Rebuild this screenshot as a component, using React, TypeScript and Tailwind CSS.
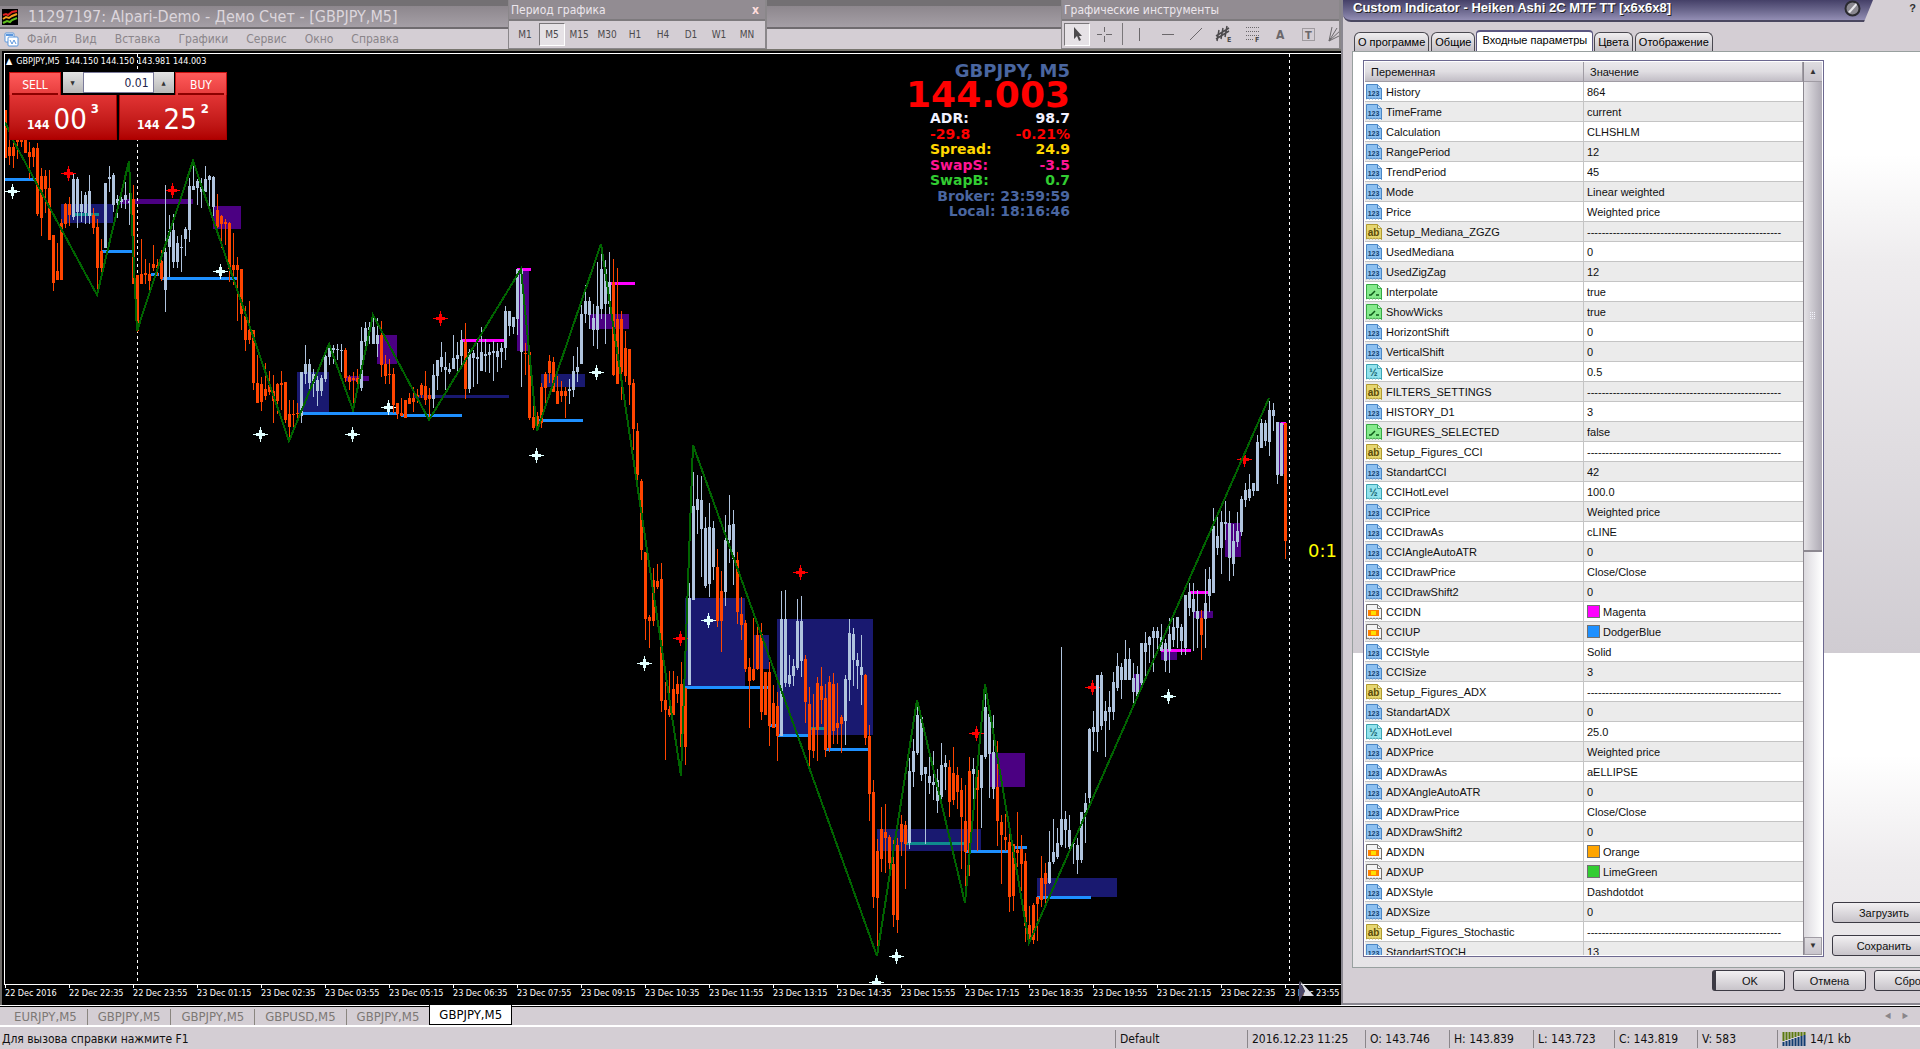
import { ReactNode } from 'react';

const DOWN = '#ff4500';
const UP = '#b0c4de';
const NAVY = '#191970';
const INDIGO = '#4b0082';
const BLUE = '#1e90ff';
const TEAL = '#0f8b8d';
const MAGENTA = '#ff00ff';

type Bar = [high: number, top: number, bottom: number, low: number];
type Run = { x: number; color: string; bars: Bar[] };

// candles are 4px apart, grouped in runs of one colour
const runs: Run[] = [
  { x: 5, color: DOWN, bars: [[110,110,158,158],[140,147,156,165],[140,147,156,168],[130,130,142,159],[130,130,142,147],[130,130,153,153],[142,152,157,179],[147,148,157,167],[143,148,214,216],[168,176,218,236],[170,176,189,213],[170,188,240,240],[235,235,283,291],[243,271,280,280],[219,223,280,280],[203,204,224,228],[197,204,215,226]] },
  { x: 73, color: UP, bars: [[174,179,217,220],[177,179,212,228],[191,204,212,222],[192,195,213,224],[175,191,216,224]] },
  { x: 93, color: DOWN, bars: [[208,215,228,234],[219,227,268,296],[239,251,268,272]] },
  { x: 105, color: UP, bars: [[183,183,248,248],[166,177,179,192],[173,175,205,212],[195,199,203,218],[190,199,202,208],[182,195,200,209],[191,201,203,225]] },
  { x: 133, color: DOWN, bars: [[185,199,284,284],[275,275,331,332],[239,274,284,284],[259,273,275,284],[263,274,281,292],[245,264,268,271],[259,265,268,276],[250,261,279,281]] },
  { x: 165, color: UP, bars: [[185,252,290,312],[215,231,247,277],[214,230,262,268],[236,243,262,268],[235,247,248,272],[227,229,239,256],[178,186,230,242],[162,186,190,190],[179,181,188,205],[178,187,192,208],[166,179,192,192],[175,176,180,212],[176,177,207,216]] },
  { x: 217, color: DOWN, bars: [[194,210,227,228],[215,216,224,248],[219,222,224,245],[222,223,269,282],[233,265,270,285],[257,265,270,321],[269,269,314,330],[306,316,340,351],[301,330,340,344],[330,330,383,390],[355,383,403,403],[377,384,402,411],[363,389,396,400],[371,385,392,395],[375,391,401,423],[383,384,401,414],[371,383,385,410],[382,382,420,423],[400,414,427,440],[400,414,415,428],[403,413,414,419]] },
  { x: 301, color: UP, bars: [[372,372,416,423],[345,364,374,384],[359,364,383,390],[369,374,383,397],[376,380,391,406],[375,378,391,396],[354,356,379,382],[343,348,357,365],[345,348,350,364],[344,349,350,360],[344,350,351,372]] },
  { x: 345, color: DOWN, bars: [[348,350,378,382],[375,377,382,390],[372,378,380,410],[369,378,382,385]] },
  { x: 361, color: UP, bars: [[327,341,388,391],[322,328,342,348],[322,327,330,344],[315,327,344,344],[318,335,344,357]] },
  { x: 381, color: DOWN, bars: [[321,335,365,377],[355,364,376,384],[359,374,375,384],[368,374,405,413],[403,403,414,419],[398,413,416,416],[400,400,418,418],[393,398,404,404],[387,398,402,412],[389,395,397,403],[383,385,395,398],[371,386,400,405],[388,395,399,417]] },
  { x: 433, color: UP, bars: [[364,375,399,408],[360,360,376,390],[342,357,367,372],[352,367,370,390],[363,369,372,374],[335,358,369,369],[342,355,359,372],[330,340,356,366]] },
  { x: 465, color: DOWN, bars: [[323,342,389,399]] },
  { x: 469, color: UP, bars: [[349,352,389,393],[350,353,358,387],[343,357,359,384],[327,352,371,371],[339,354,356,372],[344,352,355,373],[341,351,353,381],[343,351,357,372],[343,348,352,368],[306,311,348,360],[311,311,326,336],[317,317,327,334],[269,269,319,335],[268,269,352,387]] },
  { x: 525, color: DOWN, bars: [[343,353,354,375],[352,352,418,420],[395,417,428,430],[412,416,427,431],[383,387,423,428],[372,374,388,405],[355,361,373,383],[357,362,392,392],[376,391,404,404],[381,391,396,402],[387,391,396,418]] },
  { x: 569, color: UP, bars: [[379,389,391,404],[356,371,390,397],[347,367,372,382],[305,314,364,364],[285,301,314,323],[297,301,315,329],[304,318,330,346],[262,306,330,349],[250,269,309,319],[260,269,304,344],[252,282,304,314]] },
  { x: 613, color: DOWN, bars: [[259,282,375,376],[268,319,384,384],[311,319,372,400],[331,348,376,382],[349,349,385,405],[379,383,429,450],[423,431,475,492],[479,481,550,560],[552,552,619,640],[615,617,621,648],[568,580,621,626],[564,581,587,589],[563,579,701,712],[682,700,710,760],[671,709,715,717],[671,689,715,715],[676,684,694,703],[662,684,747,747],[688,688,747,765]] },
  { x: 689, color: UP, bars: [[583,598,685,685],[472,506,600,600],[475,499,510,534],[476,500,529,577],[517,528,586,588],[503,527,584,597],[521,528,567,580]] },
  { x: 717, color: DOWN, bars: [[549,567,621,627],[571,591,621,652]] },
  { x: 725, color: UP, bars: [[515,540,592,606],[495,525,540,563],[510,524,559,585]] },
  { x: 737, color: DOWN, bars: [[552,560,612,624],[597,614,625,640],[620,623,669,672],[658,667,681,728],[618,669,680,681],[627,635,669,670],[623,634,712,720],[672,672,715,715],[662,672,726,746],[685,703,728,728],[692,706,736,761]] },
  { x: 781, color: UP, bars: [[591,619,736,736],[590,619,683,687],[655,675,684,687],[659,666,676,686],[599,621,668,670],[596,621,661,677]] },
  { x: 805, color: DOWN, bars: [[655,659,702,723],[687,704,750,772],[694,728,751,758],[677,683,730,761],[667,686,700,724],[684,698,750,757],[676,682,748,752],[673,684,731,744],[683,723,728,744],[715,717,724,753]] },
  { x: 845, color: UP, bars: [[675,679,721,745],[619,633,680,701],[628,634,660,686],[653,660,666,689],[635,667,675,705]] },
  { x: 865, color: DOWN, bars: [[674,675,738,745],[725,736,794,821],[780,792,897,908],[839,851,898,951],[807,829,859,872],[804,832,838,873],[835,837,863,874],[840,864,915,927],[838,845,920,933],[815,824,842,856],[821,825,844,889]] },
  { x: 909, color: UP, bars: [[758,771,843,849],[739,751,772,787],[706,715,753,755],[716,717,775,781],[767,767,774,844],[753,776,783,794],[751,782,785,800],[769,780,801,813],[743,765,797,808],[755,763,767,790]] },
  { x: 949, color: DOWN, bars: [[760,767,802,817],[747,773,800,805],[767,775,792,809],[778,790,817,869],[785,821,852,893],[757,771,853,876]] },
  { x: 973, color: UP, bars: [[758,769,774,804]] },
  { x: 977, color: DOWN, bars: [[757,770,790,851]] },
  { x: 981, color: UP, bars: [[755,755,788,828],[694,707,757,759],[710,714,754,798],[715,752,789,799]] },
  { x: 997, color: DOWN, bars: [[741,787,821,846],[815,822,835,884],[814,837,840,851],[833,842,897,912],[844,844,896,911],[812,850,853,867],[835,849,864,891],[853,861,926,942],[906,925,940,944],[903,905,940,944],[897,897,904,941],[856,878,900,907],[863,873,884,904]] },
  { x: 1049, color: UP, bars: [[831,862,883,884],[819,852,862,864],[828,843,857,859],[647,819,845,847],[811,819,830,848],[815,830,847,851],[843,843,844,864],[838,845,860,874],[812,812,860,863],[793,803,813,843],[728,729,798,804],[711,727,732,751],[675,675,732,752],[672,675,726,730],[701,711,721,757],[691,707,712,730],[672,682,712,720],[653,666,688,691],[663,667,680,699],[640,659,680,680],[648,659,680,680],[663,678,692,704],[666,674,696,698],[643,643,683,689],[632,643,652,676],[636,637,645,663],[627,631,638,672],[627,631,638,651],[624,637,651,651],[639,643,661,672],[618,634,651,673],[618,627,640,647],[617,617,628,648],[624,627,641,655],[595,595,648,655],[583,592,608,616],[583,599,612,651],[590,611,619,648]] },
  { x: 1201, color: DOWN, bars: [[610,618,635,660]] },
  { x: 1205, color: UP, bars: [[569,603,619,648],[567,579,596,612],[508,526,593,593],[514,536,548,555],[511,522,548,574],[501,522,524,540],[511,523,558,581],[524,541,564,576],[512,531,542,547],[496,499,532,536],[483,490,500,507],[474,489,498,501],[483,483,491,496],[435,442,491,491],[419,423,448,448],[420,423,441,446],[401,410,442,456],[403,410,416,431],[422,422,475,484],[423,423,476,476]] },
  { x: 1285, color: DOWN, bars: [[423,423,541,559]] },
];

// [x1, y1, x2, y2, fill]
const zones: [number, number, number, number, string][] = [
  [61, 204, 113, 223, NAVY], [117, 199, 193, 204, INDIGO], [213, 206, 241, 229, INDIGO],
  [297, 372, 329, 413, NAVY], [345, 376, 369, 381, INDIGO], [377, 335, 397, 364, INDIGO],
  [413, 395, 509, 398, NAVY], [517, 271, 529, 351, INDIGO], [541, 374, 585, 387, NAVY],
  [590, 314, 629, 329, INDIGO], [685, 598, 745, 686, NAVY], [753, 635, 769, 669, NAVY],
  [777, 619, 873, 735, NAVY], [877, 829, 981, 851, NAVY], [989, 753, 1025, 787, INDIGO],
  [1037, 878, 1117, 897, NAVY], [1133, 674, 1141, 692, INDIGO], [1161, 651, 1177, 660, INDIGO],
  [1193, 611, 1213, 618, INDIGO], [1225, 523, 1241, 557, INDIGO], [1277, 422, 1285, 474, INDIGO],
];

// horizontal levels, 3px thick: [x1, x2, y, fill]
const levels: [number, number, number, string][] = [
  [5, 36, 178, BLUE], [73, 99, 213, TEAL], [101, 133, 250, BLUE], [151, 159, 273, BLUE],
  [161, 238, 277, BLUE], [301, 397, 412, BLUE], [401, 462, 414, BLUE], [461, 504, 339, MAGENTA],
  [517, 531, 268, MAGENTA], [537, 583, 419, BLUE], [611, 635, 282, MAGENTA], [685, 769, 686, BLUE],
  [770, 778, 724, BLUE], [777, 810, 734, BLUE], [809, 825, 727, TEAL], [825, 870, 748, BLUE],
  [905, 965, 842, TEAL], [965, 1009, 850, BLUE], [1013, 1027, 846, BLUE], [1037, 1091, 896, BLUE],
  [1161, 1191, 649, MAGENTA], [1189, 1209, 591, MAGENTA], [1281, 1286, 422, MAGENTA],
];

const zigzag =
  '5,122 13,140 97,295 129,161 137,331 193,161 289,441 329,344 353,410 373,315 429,420 521,269 537,431 601,244 681,776 693,445 877,956 917,700 965,903 985,684 1029,943 1269,398';

const redStars = [[68, 173], [172, 190], [440, 318], [680, 638], [800, 572], [976, 733], [1092, 687], [1244, 459]];
const whiteStars = [[12, 191], [220, 271], [260, 434], [352, 434], [388, 407], [536, 455], [596, 372], [644, 663], [708, 620], [896, 956], [876, 982], [1168, 696]];

const times = ['22 Dec 2016', '22 Dec 22:35', '22 Dec 23:55', '23 Dec 01:15', '23 Dec 02:35', '23 Dec 03:55', '23 Dec 05:15', '23 Dec 06:35', '23 Dec 07:55', '23 Dec 09:15', '23 Dec 10:35', '23 Dec 11:55', '23 Dec 13:15', '23 Dec 14:35', '23 Dec 15:55', '23 Dec 17:15', '23 Dec 18:35', '23 Dec 19:55', '23 Dec 21:15', '23 Dec 22:35', '23 Dec 23:55'];

const Star = ({ x, y, color }: { x: number; y: number; color: string }) => (
  <path d={`M${x - 7} ${y}h15v1h-15zM${x} ${y - 7}h1v15h-1zM${x - 4} ${y - 1}h9v3h-9zM${x - 1} ${y - 4}h3v9h-3z`} fill={color} />
);

const Chart = () => (
  <svg className="block h-full w-full" shapeRendering="crispEdges" aria-label="GBPJPY,M5">
    <g transform="translate(-5 -54)">
      {zones.map(([x1, y1, x2, y2, fill]) => (
        <rect key={`${x1}-${y1}`} x={x1} y={y1} width={x2 - x1} height={y2 - y1} fill={fill} />
      ))}
      {levels.map(([x1, x2, y, fill]) => (
        <rect key={`${x1}-${y}`} x={x1} y={y} width={x2 - x1} height={3} fill={fill} />
      ))}
      <path d="M137.5 54V983M1289.5 54V983" stroke="#fff" strokeDasharray="3 3" />
      {redStars.map(([x, y]) => <Star key={x} x={x} y={y} color="#ff0000" />)}
      {whiteStars.map(([x, y]) => <Star key={x} x={x} y={y} color="#e0ffff" />)}
      {runs.map((run) =>
        run.bars.map(([high, top, bottom, low], i) => {
          const x = run.x + i * 4;
          return (
            <path
              key={x}
              d={`M${x} ${high}h1V${low}h-1zM${x - 1} ${top}h3V${bottom}h-3z`}
              fill={run.color}
            />
          );
        })
      )}
      <polyline points={zigzag} fill="none" stroke="#006400" strokeWidth="2" />
    </g>
  </svg>
);

const TitleStrip = ({ children }: { children?: ReactNode }) => (
  <div className="flex h-[29px] items-center gap-2 border-t-[6px] border-b-2 border-t-[#737073] border-b-[#6f6b6f] bg-linear-to-b from-[#8d878d] to-[#a59fa6] px-0.5">
    {children}
  </div>
);

const menu = ['Файл', 'Вид', 'Вставка', 'Графики', 'Сервис', 'Окно', 'Справка'];
const periods = ['M1', 'M5', 'M15', 'M30', 'H1', 'H4', 'D1', 'W1', 'MN'];

const pressed = 'grid h-[23px] place-items-center border border-t-[#7a777a] border-l-[#7a777a] border-r-white border-b-white bg-[#e6e2e6] text-[10px] text-[#4c4a4c]';

const tools: [string, ReactNode][] = [
  ['Курсор', <path d="M6 2v12l3-3 2 5 2-1-2-4h3z" fill="#4c4a4c" stroke="none" />],
  ['Перекрестие', <path d="M9.5 2v5m0 4v6M2 9.5h5m4 0h6" />],
  ['Вертикальная линия', <path d="M9.5 3v13" />],
  ['Горизонтальная линия', <path d="M3 9.5h12" />],
  ['Трендовая линия', <path d="M3 15L15 3" />],
  ['Канал', <><path d="M1 11L14 3M1 14L14 6M4 5L2 16M8 3L6 14M12 1L10 12" strokeWidth="1.500" stroke="#4c4a4c" /><text x="12" y="17" fontSize="7" fontWeight="bold" fill="#4c4a4c" stroke="none">E</text></>],
  ['Фибоначчи', <><path d="M3 2.5h13M3 6.5h13M3 10.5h13M3 14.5h8" strokeDasharray="1 1" /><text x="12" y="17" fontSize="7" fontWeight="bold" fill="#4c4a4c" stroke="none">F</text></>],
  ['Текст', <text x="5" y="14" fontSize="12" fontWeight="bold" fill="#6b686b" stroke="none">A</text>],
  ['Метка', <><rect x="3.5" y="3.5" width="12" height="12" strokeDasharray="1 1" /><text x="6" y="14" fontSize="11" fontWeight="bold" fill="#6b686b" stroke="none">T</text></>],
  ['Веер', <path d="M2 16L5 2M2 16L10 3M2 16L14 5M2 16L16 9" />],
];

const Toolbar = ({ title, width, closable, children }: { title: string; width: string; closable?: boolean; children: ReactNode }) => (
  <div className={`${width} shrink-0 overflow-hidden border-r-2 border-b border-l border-[#8a878a] bg-[#d4ced4]`}>
    <div className="flex h-[21px] items-center justify-between border-b-2 border-[#7d7a7d] bg-[#928c92] pr-1.5 pl-0.5 text-[12px] whitespace-nowrap text-[#ece6ec]">
      {title}
      {closable && <button aria-label="Закрыть" className="text-[12px] leading-3 font-bold text-[#ffdcdc]">x</button>}
    </div>
    <div className="flex h-[26px] items-center pl-0.5">{children}</div>
  </div>
);

const AppHeader = () => (
  <div className="flex h-[51px] shrink-0 border-b-2 border-[#77756e]">
    <div className="w-[508px] shrink-0">
      <TitleStrip>
        <svg className="shrink-0" width="16" height="16" viewBox="0 0 16 16" fill="none" strokeWidth="2">
          <rect width="16" height="16" fill="#000" />
          <path d="M1 6l3-1 2 1 4-3 5-1" stroke="#e02020" />
          <path d="M1 10l3-2 3 1 3-2 5-2" stroke="#f0a020" />
          <path d="M1 14l4-2 3 1 2-2 5-2" stroke="#60c020" />
        </svg>
        <h1 className="pl-0.5 text-[16px] leading-5 whitespace-nowrap text-[#dcd6dc]">11297197: Alpari-Demo - Демо Счет - [GBPJPY,M5]</h1>
      </TitleStrip>
      <nav className="flex h-[20px] items-center bg-[#d4ced4] pl-1">
        <svg width="15" height="15" viewBox="0 0 15 15" fill="#fff" stroke="#5b96dc">
          <rect x="1" y="1" width="9" height="9" rx="1" />
          <path d="M2 3h7" strokeWidth="2" />
          <rect x="4" y="5" width="10" height="9" rx="1" />
          <path d="M6 8l2 4 2-4 2 4" fill="none" />
        </svg>
        <div className="flex gap-[18px] pl-2">
          {menu.map((item) => (
            <button key={item} className="text-[12px] leading-4 text-[#8a858a]">{item}</button>
          ))}
        </div>
      </nav>
    </div>

    <Toolbar title="Период графика" width="w-[259px]" closable>
      {periods.map((p) => (
        <button
          key={p}
          className={p === 'M5' ? `${pressed} w-[26px]` : 'h-[22px] w-7 text-[10px] text-[#4c4a4c]'}
        >
          {p}
        </button>
      ))}
    </Toolbar>

    <div className="min-w-0 flex-1">
      <TitleStrip />
      <div className="h-[20px] bg-[#d4ced4]" />
    </div>

    <Toolbar title="Графические инструменты" width="w-[280px]">
      {tools.map(([name, icon], i) => (
        <button
          key={name}
          aria-label={name}
          className={
            i === 0
              ? `${pressed} w-[26px] shrink-0`
              : i === 2
                ? 'ml-1 grid h-[22px] w-8 shrink-0 place-items-center border-l border-[#7a777a]'
                : 'grid h-[22px] w-[28px] shrink-0 place-items-center'
          }
        >
          <svg width="18" height="18" viewBox="0 0 18 18" fill="none" stroke="#6b686b">{icon}</svg>
        </button>
      ))}
    </Toolbar>
  </div>
);

const TradePanel = () => (
  <div className="absolute top-[21px] left-[7px] w-[218px] text-white">
    <div className="flex h-[23px] justify-between">
      <button className="w-[52px] border border-b-0 border-[#c81010] bg-linear-to-b from-[#ff5a5a] to-[#e63c3c] px-0.5 text-[12px] leading-6">
        SELL
        <span className="block h-0.5 -translate-y-1 bg-[#8c0000]" />
      </button>
      <div className="flex h-[21px]">
        <button aria-label="Уменьшить" className="w-5 bg-linear-to-b from-[#e4e4e4] to-[#b8b8b8] text-[6px] text-[#333]">▼</button>
        <input aria-label="Объем" defaultValue="0.01" className="w-[71px] border border-[#7a7a9a] bg-white pr-1 text-right text-[12px] text-[#22224a]" />
        <button aria-label="Увеличить" className="w-5 bg-linear-to-b from-[#e4e4e4] to-[#b8b8b8] text-[6px] text-[#333]">▲</button>
      </div>
      <button className="w-[52px] border border-b-0 border-[#c81010] bg-linear-to-b from-[#ff5a5a] to-[#e63c3c] px-0.5 text-[12px] leading-6">
        BUY
        <span className="block h-0.5 -translate-y-1 bg-[#8c0000]" />
      </button>
    </div>
    <div className="flex h-[45px] gap-0.5">
      {[['00', '3'], ['25', '2']].map(([big, small]) => (
        <div key={big} className="flex flex-1 items-end justify-center gap-1 border border-t-0 border-[#a80000] bg-linear-to-b from-[#e23434] to-[#b00000] pb-1.5">
          <span className="text-[12px] leading-4 font-bold">144</span>
          <span className="text-[29px] leading-7">{big}</span>
          <span className="self-start pt-1 text-[13px] leading-5 font-bold">{small}</span>
        </div>
      ))}
    </div>
  </div>
);

const stats = [
  ['ADR:', '98.7', 'text-[#f0f0ff]'],
  ['-29.8', '-0.21%', 'text-[#ff0000]'],
  ['Spread:', '24.9', 'text-[#ffd700]'],
  ['SwapS:', '-3.5', 'text-[#ff1493]'],
  ['SwapB:', '0.7', 'text-[#32cd32]'],
];

const QuoteInfo = () => (
  <div className="absolute top-[10px] right-[271px] w-[164px] text-right font-['DejaVu_Sans'] font-bold text-[#4a66a0]">
    <div className="text-[18px] leading-5 whitespace-nowrap">GBPJPY, M5</div>
    <div className="text-[36px] leading-7 text-[#ff0000]">144.003</div>
    <div className="grid h-[110px] auto-rows-fr pt-px pl-6 text-[14px] leading-4">
      {stats.map(([label, value, color]) => (
        <div key={label} className={`flex justify-between ${color}`}>
          <span>{label}</span>
          <span>{value}</span>
        </div>
      ))}
      <div className="whitespace-nowrap">Broker: 23:59:59</div>
      <div className="whitespace-nowrap">Local: 18:16:46</div>
    </div>
  </div>
);

type Kind = 'int' | 'str' | 'bool' | 'dbl' | 'color';

const DASHES = '-----------------------------------------------------';

const params: [Kind, string, string, string?][] = [
  ['int', 'History', '864'],
  ['int', 'TimeFrame', 'current'],
  ['int', 'Calculation', 'CLHSHLM'],
  ['int', 'RangePeriod', '12'],
  ['int', 'TrendPeriod', '45'],
  ['int', 'Mode', 'Linear weighted'],
  ['int', 'Price', 'Weighted price'],
  ['str', 'Setup_Mediana_ZGZG', DASHES],
  ['int', 'UsedMediana', '0'],
  ['int', 'UsedZigZag', '12'],
  ['bool', 'Interpolate', 'true'],
  ['bool', 'ShowWicks', 'true'],
  ['int', 'HorizontShift', '0'],
  ['int', 'VerticalShift', '0'],
  ['dbl', 'VerticalSize', '0.5'],
  ['str', 'FILTERS_SETTINGS', DASHES],
  ['int', 'HISTORY_D1', '3'],
  ['bool', 'FIGURES_SELECTED', 'false'],
  ['str', 'Setup_Figures_CCI', DASHES],
  ['int', 'StandartCCI', '42'],
  ['dbl', 'CCIHotLevel', '100.0'],
  ['int', 'CCIPrice', 'Weighted price'],
  ['int', 'CCIDrawAs', 'cLINE'],
  ['int', 'CCIAngleAutoATR', '0'],
  ['int', 'CCIDrawPrice', 'Close/Close'],
  ['int', 'CCIDrawShift2', '0'],
  ['color', 'CCIDN', 'Magenta', 'bg-[#ff00ff]'],
  ['color', 'CCIUP', 'DodgerBlue', 'bg-[#1e90ff]'],
  ['int', 'CCIStyle', 'Solid'],
  ['int', 'CCISize', '3'],
  ['str', 'Setup_Figures_ADX', DASHES],
  ['int', 'StandartADX', '0'],
  ['dbl', 'ADXHotLevel', '25.0'],
  ['int', 'ADXPrice', 'Weighted price'],
  ['int', 'ADXDrawAs', 'aELLIPSE'],
  ['int', 'ADXAngleAutoATR', '0'],
  ['int', 'ADXDrawPrice', 'Close/Close'],
  ['int', 'ADXDrawShift2', '0'],
  ['color', 'ADXDN', 'Orange', 'bg-[#ffa500]'],
  ['color', 'ADXUP', 'LimeGreen', 'bg-[#32cd32]'],
  ['int', 'ADXStyle', 'Dashdotdot'],
  ['int', 'ADXSize', '0'],
  ['str', 'Setup_Figures_Stochastic', DASHES],
  ['int', 'StandartSTOCH', '13'],
];

const kinds: Record<Kind, { fill: string; edge: string; ink: string; text?: string }> = {
  int: { fill: '#8dc0f0', edge: '#4a86c4', ink: '#12406e', text: '123' },
  str: { fill: '#e6d670', edge: '#b09a30', ink: '#5a4a08', text: 'ab' },
  bool: { fill: '#86ea8c', edge: '#36a844', ink: '#0c5a18' },
  dbl: { fill: '#92e2ec', edge: '#3ca4b4', ink: '#10606e', text: '½' },
  color: { fill: '#f4f4f4', edge: '#707070', ink: '#ff8000' },
};

const KindIcon = ({ kind }: { kind: Kind }) => {
  const { fill, edge, ink, text } = kinds[kind];
  return (
    <svg className="shrink-0" width="16" height="16" viewBox="0 0 16 16">
      <path d="M.5.5h11l4 4v11l-1.500-1.500-1.500 1-1.500-1-1.500 1-1.500-1-1.500 1-1.500-1-1.500 1-1.500-1-1.500 1z" fill={fill} stroke={edge} />
      <path d="M11.500.500v4h4" fill="#fff" fillOpacity=".5" stroke={edge} />
      {text && (
        <text x="7.500" y="12" textAnchor="middle" fontSize={text === '123' ? 7 : 10} fontWeight="bold" fill={ink}>{text}</text>
      )}
      {kind === 'bool' && <path d="M3 11h2l4-4M10 11h3" fill="none" stroke={ink} strokeWidth="1.500" />}
      {kind === 'color' && <><rect x="2" y="6" width="11" height="6" fill={ink} /><rect x="5" y="7" width="5" height="4" fill="#ffe000" /></>}
    </svg>
  );
};

const headCell = 'h-5 border-r border-b border-[#a09ca4] bg-linear-to-b from-[#ebe9ec] via-[#e0dee2] to-[#c2bec6] text-left font-normal';

const ParamsTable = () => (
  <div className="flex min-h-0 w-[461px] shrink-0 border border-[#6c6890] bg-white p-px">
    <div className="min-h-0 flex-1 overflow-hidden">
      <table className="w-full table-fixed border-separate border-spacing-0 text-[11px] leading-4 text-[#101010]">
        <thead>
          <tr>
            <th className={`${headCell} w-[219px] pl-1.5`}>Переменная</th>
            <th className={`${headCell} pl-1.5`}>Значение</th>
          </tr>
        </thead>
        <tbody>
          {params.map(([kind, name, value, swatch]) => (
            <tr key={name} className="even:bg-[#ebebeb]">
              <td className="h-5 border-r border-b border-[#c4c4c4] p-0">
                <div className="flex h-[19px] items-center gap-1 overflow-hidden pl-px">
                  <KindIcon kind={kind} />
                  {name}
                </div>
              </td>
              <td className="h-5 border-b border-[#c4c4c4] p-0 pl-[3px] whitespace-nowrap">
                <div className="flex h-[19px] items-center gap-[3px] overflow-hidden">
                  {swatch && <span className={`h-[13px] w-[13px] border border-[#707070] ${swatch}`} />}
                  {value}
                </div>
              </td>
            </tr>
          ))}
        </tbody>
      </table>
    </div>
    <div className="flex w-[19px] shrink-0 flex-col border-l border-[#8c8890] bg-linear-to-r from-[#dcdadf] to-white text-[8px] text-[#333]">
      <button aria-label="Вверх" className="h-5 border-b border-[#a09ca4] bg-linear-to-b from-[#dedce0] to-[#c8c4cc]">▲</button>
      <div className="grid h-[470px] place-items-center border-b-2 border-[#8c8890] bg-linear-to-r from-[#e4e2e6] to-[#aeaab4]">
        <svg width="6" height="8" viewBox="0 0 6 8" fill="none" stroke="#f2f2fa" strokeDasharray="1 1">
          <path d="M0 .5h6M0 2.5h6M0 4.5h6M0 6.5h6" />
        </svg>
      </div>
      <div className="flex-1" />
      <button aria-label="Вниз" className="h-[18px] border border-[#a09ca4] bg-linear-to-b from-[#dedce0] to-[#c8c4cc]">▼</button>
    </div>
  </div>
);

const tabs = ['О программе', 'Общие', 'Входные параметры', 'Цвета', 'Отображение'];

const dialogButton = 'h-[21px] shrink-0 rounded-[3px] border border-[#3c3a44] bg-linear-to-b from-[#f2f0f2] to-[#c8c4ca] text-[11px] leading-4 text-[#101010]';

const IndicatorDialog = () => (
  <div className="flex w-[579px] shrink-0 flex-col overflow-hidden border-b-2 border-l-2 border-[#8a8790] bg-[#d4ced4] font-['Liberation_Sans',sans-serif]">
    <div className="flex h-[30px] items-start justify-between pr-1">
      <div className="flex h-[22px] w-[530px] items-center justify-between rounded-bl-lg border-b-2 border-[#4a4760] bg-linear-to-b from-[#454068] via-[#6a668c] to-[#938eb4] pr-2.5 pb-1 pl-2.5 [clip-path:polygon(0_0,100%_0,calc(100%-9px)_100%,0_100%)]">
        <h2 className="text-[13px] font-bold whitespace-nowrap text-white [text-shadow:1px_1px_0_#222]">Custom Indicator - Heiken Ashi 2C MTF TT [x6x6x8]</h2>
        <button aria-label="Закрыть" className="mr-0.5">
          <svg width="17" height="17" viewBox="0 0 17 17">
            <circle cx="8.500" cy="8.500" r="7" fill="#8a8890" stroke="#2a2a30" strokeWidth="2" />
            <path d="M4 12L12 3l1 2-7 8z" fill="#e8e8ec" />
          </svg>
        </button>
      </div>
      <button className="text-[11px] leading-4 font-bold text-[#303030]">?</button>
    </div>

    <div className="flex h-[21px] items-end pl-[10px]">
      {tabs.map((tab) => (
        <button
          key={tab}
          className={
            tab === 'Входные параметры'
              ? 'h-[21px] rounded-t border-x border-t-2 border-[#5a5680] bg-white px-[5px] pb-1 text-[11px] leading-4'
              : 'mx-px h-[19px] rounded-t-md border border-b-0 border-[#4a4850] bg-linear-to-b from-[#f0eef0] to-[#c4c0c6] px-[3px] text-[11px] leading-4'
          }
        >
          {tab}
        </button>
      ))}
    </div>

    <div className="ml-[9px] flex min-h-0 flex-1 border-t border-b border-l border-[#98a09f] bg-[linear-gradient(to_bottom,#fff_0%,#fff_17%,#eeecee_35%,#d0ccd2_100%)] bg-[length:100%_601px] bg-repeat-y pt-2 pb-[10px] pl-[10px]">
      <ParamsTable />
      <div className="flex flex-col justify-end gap-3 pb-px pl-2">
        <button className={`${dialogButton} w-[104px]`}>Загрузить</button>
        <button className={`${dialogButton} w-[104px]`}>Сохранить</button>
      </div>
    </div>

    <div className="flex h-[35px] gap-2 pt-0.5 pl-[369px]">
      <button className={`${dialogButton} w-[73px] border-l-4`}>OK</button>
      <button className={`${dialogButton} w-[73px]`}>Отмена</button>
      <button className={`${dialogButton} w-[73px]`}>Сброс</button>
    </div>
  </div>
);

const chartTabs = ['EURJPY,M5', 'GBPJPY,M5', 'GBPJPY,M5', 'GBPUSD,M5', 'GBPJPY,M5'];

const statusCells = [
  ['Default', 'w-[132px]'],
  ['2016.12.23 11:25', 'w-[118px]'],
  ['O: 143.746', 'w-[84px]'],
  ['H: 143.839', 'w-[84px]'],
  ['L: 143.723', 'w-[81px]'],
  ['C: 143.819', 'w-[83px]'],
  ['V: 583', 'w-[80px]'],
];

export default function App() {
  return (
    <div className="flex h-screen flex-col overflow-hidden bg-[#d4ced4] font-['DejaVu_Sans_Condensed','Noto_Sans',sans-serif]">
      <div className="flex min-h-0 flex-1">
        <div className="flex min-w-0 flex-1 flex-col">
          <AppHeader />
          <main className="relative flex min-h-0 flex-1 flex-col overflow-hidden border-l-2 border-[#6e6b68] bg-black pt-0.5 pl-0.5">
            <div className="min-h-0 flex-1 border-t border-l border-white">
              <Chart />
            </div>
            <div className="flex h-[21px] shrink-0 border-t border-white pl-px text-[9px] leading-[10px] whitespace-nowrap text-white">
              {times.map((t) => (
                <div key={t} className="w-16 shrink-0">
                  <div className="h-[3px] w-px bg-white" />
                  {t}
                </div>
              ))}
            </div>
            <div className="absolute top-0.5 left-1 flex gap-1 text-[9px] leading-4 whitespace-pre text-white">
              <span>▲</span>
              <span>GBPJPY,M5  144.150 144.150 143.981 144.003</span>
            </div>
            <TradePanel />
            <QuoteInfo />
            <span className="absolute top-[490px] right-[4px] font-['DejaVu_Sans'] text-[18px] leading-5 text-[#ffff00]">0:1</span>
            <svg className="absolute right-[26px] bottom-[2px]" width="16" height="22" viewBox="0 0 16 22">
              <path d="M0 0l6 10-6 11z" fill="#4a4668" />
              <path d="M1 0l14 15H4l2-5z" fill="#dcdce4" />
            </svg>
          </main>
        </div>
        <IndicatorDialog />
      </div>

      <div className="flex h-[22px] shrink-0 items-start border-b-2 border-b-white pl-1 text-[13px] leading-[18px] text-[#7c7874] shadow-[inset_0_1px_0_#fff,inset_0_2px_0_#000]">
        <div className="flex pt-1">
          {chartTabs.map((tab, i) => (
            <button key={i} className="h-4 border-r border-[#8a8680] px-[10px] leading-4 last:border-r-0">{tab}</button>
          ))}
        </div>
        <button className="h-5 border border-t-0 border-black bg-white px-[9px] text-black">GBPJPY,M5</button>
        <div className="flex flex-1 justify-end gap-3 pt-0.5 pr-3 text-[8px] text-[#8a868a]">
          <button aria-label="Назад">◀</button>
          <button aria-label="Вперед">▶</button>
        </div>
      </div>

      <footer className="flex h-[22px] shrink-0 items-center pt-0.5 pl-0.5 text-[12px] text-[#101010]">
        <span className="flex-1">Для вызова справки нажмите F1</span>
        {statusCells.map(([text, width]) => (
          <span key={text} className={`${width} h-[18px] border-l border-[#8a868a] pl-1 leading-[18px] whitespace-nowrap`}>{text}</span>
        ))}
        <span className="flex h-[18px] w-[143px] items-center gap-1 border-l border-[#8a868a] pl-1">
          <svg width="24" height="14" viewBox="0 0 24 14">
            <path d="M1.500 0v9M4.500 0v8M7.500 0v7M10.500 0v6M13.500 0v5M16.500 0v4M19.500 0v4M22.500 0v3" stroke="#5c7a10" strokeWidth="2" />
            <path d="M1.500 10v4M4.500 9v5M7.500 8v6M10.500 7v7M13.500 6v8M16.500 5v9M19.500 4v10M22.500 3v11" stroke="#103c70" strokeWidth="2" />
          </svg>
          14/1 kb
        </span>
      </footer>
    </div>
  );
}
